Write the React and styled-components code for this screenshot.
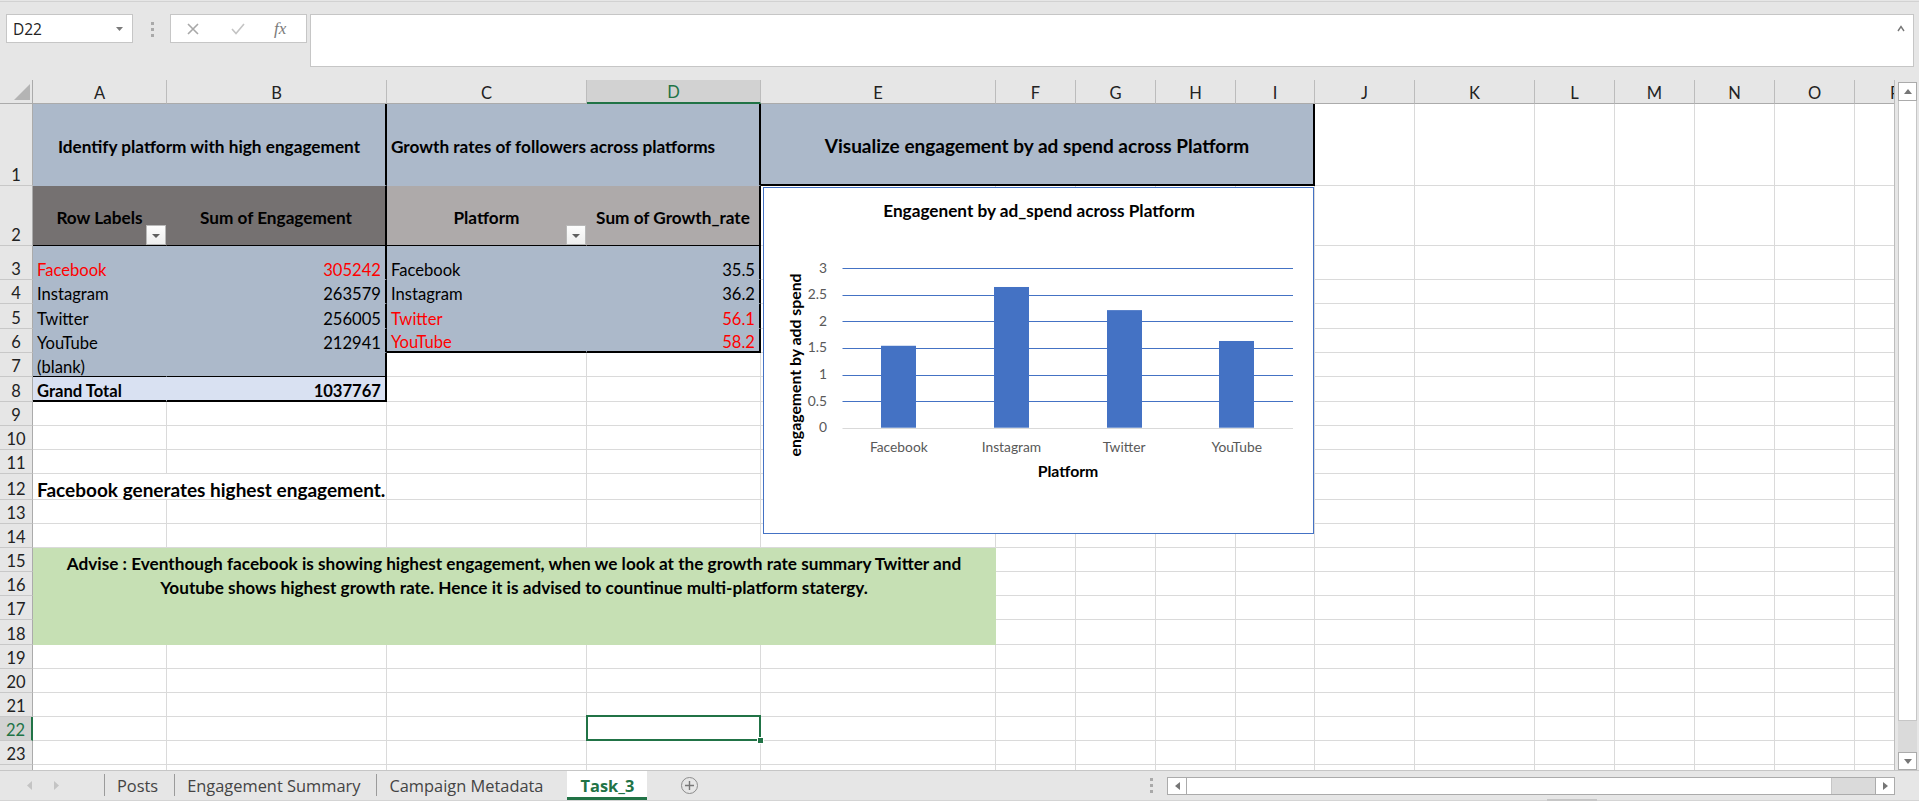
import React from 'react'
import styled, { createGlobalStyle, css } from 'styled-components'

const GREEN = '#217346'
const GRID = '#dadada'
const HEAD_BG = '#e6e6e6'
const FILL = {
  blue: '#acb9ca',
  dark: '#757171',
  gray: '#aeaaaa',
  total: '#d9e1f2',
  green: '#c6e0b4',
}
const SIZE = { md: '16.6px', head: '17.2px', lg: '19px', xl: '19px' }
const ALIGN = { left: 'flex-start', center: 'center', right: 'flex-end' }
const VALIGN = { top: 'flex-start', center: 'center', bottom: 'flex-end' }

const LETTERS = 'ABCDEFGHIJKLMNOP'.split('')
const COL_W = [134, 220, 200, 174, 235, 80, 80, 80, 79, 100, 120, 80, 80, 80, 80, 81]
const ROW_H = [82, 60, 34, 24, 25, 24, 24, 25, 24, 24, 24, 26, 24, 24, 24, 24, 24, 25, 24, 24, 24, 24, 24, 24]
const LAST_SHOWN = 23
const ACTIVE = { r: 22, c: 4 }

const engagement = [
  ['Facebook', '305242', true],
  ['Instagram', '263579'],
  ['Twitter', '256005'],
  ['YouTube', '212941'],
  ['(blank)', ''],
]
const growth = [
  ['Facebook', '35.5'],
  ['Instagram', '36.2'],
  ['Twitter', '56.1', true],
  ['YouTube', '58.2', true],
]
const head = { bold: true, align: 'center', valign: 'center', size: 'head' }

const specs = [
  { r: 1, c: 1, cs: 2, fill: 'blue', ...head, br: 2, text: 'Identify platform with high engagement' },
  { r: 1, c: 3, cs: 2, fill: 'blue', ...head, align: 'left', br: 2, text: 'Growth rates of followers across platforms' },
  { r: 1, c: 5, cs: 5, fill: 'blue', ...head, size: 'lg', br: 2, bb: 2, text: 'Visualize engagement by ad spend across Platform' },
  { r: 2, c: 1, fill: 'dark', ...head, bb: 1, filter: true, text: 'Row Labels' },
  { r: 2, c: 2, fill: 'dark', ...head, bb: 1, br: 2, text: 'Sum of Engagement' },
  { r: 2, c: 3, fill: 'gray', ...head, bb: 1, filter: true, text: 'Platform' },
  { r: 2, c: 4, fill: 'gray', ...head, bb: 1, br: 2, text: 'Sum of Growth_rate' },
  ...engagement.flatMap(([name, value, hot], i) => [
    { r: 3 + i, c: 1, fill: 'blue', red: hot, bb: i === 4 ? 1 : 0, text: name },
    { r: 3 + i, c: 2, fill: 'blue', red: hot, align: 'right', br: 2, bb: i === 4 ? 1 : 0, text: value },
  ]),
  ...growth.flatMap(([name, value, hot], i) => [
    { r: 3 + i, c: 3, fill: 'blue', red: hot, bb: i === 3 ? 2 : 0, text: name },
    { r: 3 + i, c: 4, fill: 'blue', red: hot, align: 'right', br: 2, bb: i === 3 ? 2 : 0, text: value },
  ]),
  { r: 8, c: 1, fill: 'total', bold: true, bb: 2, text: 'Grand Total' },
  { r: 8, c: 2, fill: 'total', bold: true, align: 'right', bb: 2, br: 2, text: '1037767' },
  { r: 12, c: 1, cs: 2, bold: true, size: 'xl', text: 'Facebook generates highest engagement.' },
  {
    r: 15, c: 1, cs: 5, rs: 4, fill: 'green', bold: true, size: 'head', align: 'center', valign: 'top', wrap: true,
    text: [
      'Advise : Eventhough facebook is showing highest engagement, when we look at the growth rate summary Twitter and',
      'Youtube shows highest growth rate. Hence it is advised to countinue multi-platform statergy.',
    ],
  },
]

const specAt = {}
const covered = new Set()
specs.forEach((s) => {
  specAt[`${s.r}-${s.c}`] = s
  for (let r = s.r; r < s.r + (s.rs || 1); r++)
    for (let c = s.c; c < s.c + (s.cs || 1); c++)
      if (r !== s.r || c !== s.c) covered.add(`${r}-${c}`)
})

const BARS = [
  { label: 'Facebook', value: 1.54 },
  { label: 'Instagram', value: 2.645 },
  { label: 'Twitter', value: 2.21 },
  { label: 'YouTube', value: 1.63 },
]
const TICKS = [3, 2.5, 2, 1.5, 1, 0.5, 0]
const PLOT = { left: 79.5, right: 530, base: 240.7, unit: 53.2 }
const TABS = ['Posts', 'Engagement Summary', 'Campaign Metadata']

const GlobalStyle = createGlobalStyle`
  html, body { margin: 0; padding: 0; overflow: hidden; background: #e6e6e6; }
  body { font-family: Lato, "Noto Sans", sans-serif; }
`

const Window = styled.div`
  width: 1919px;
  height: 801px;
  display: flex;
  flex-direction: column;
  overflow: hidden;
  background: ${HEAD_BG};
  font-family: Lato, "Noto Sans", sans-serif;
`

const FormulaBar = styled.div`
  flex: 0 0 80px;
  box-sizing: border-box;
  display: flex;
  align-items: flex-start;
  padding: 14px 5px 0 6px;
  box-shadow: inset 0 1px 0 ${HEAD_BG}, inset 0 2px 0 #d2d2d2;
`

const NameBox = styled.div`
  width: 127px;
  height: 29px;
  box-sizing: border-box;
  display: flex;
  align-items: center;
  justify-content: space-between;
  padding: 0 9px 0 6px;
  background: #fff;
  border: 1px solid #c6c6c6;
  font: 15.5px "Open Sans", sans-serif;
  color: #222;
`

const Caret = styled.svg`
  width: 7px;
  height: 4px;
  fill: #7a7a7a;
`

const Grip = styled.div`
  display: flex;
  flex-direction: column;
  gap: 3px;
  i {
    width: 3px;
    height: 3px;
    background: #a9a9a9;
  }
`

const BarGrip = styled(Grip)`
  margin: 8px 16px 0 18px;
`

const FxBox = styled.div`
  width: 137px;
  height: 29px;
  box-sizing: border-box;
  display: flex;
  align-items: center;
  padding-left: 16px;
  background: #fff;
  border: 1px solid #c6c6c6;
`

const FxIcon = styled.svg`
  width: ${(p) => p.$w}px;
  height: 12px;
  margin-left: ${(p) => p.$ml}px;
  fill: none;
  stroke: ${(p) => p.$tone};
  stroke-width: 1.6;
`

const FxLabel = styled.span`
  margin-left: 29px;
  font: italic 17px "Liberation Serif", serif;
  color: #7a7a7a;
`

const FormulaInput = styled.div`
  flex: 1;
  height: 53px;
  margin-left: 3px;
  box-sizing: border-box;
  position: relative;
  background: #fff;
  border: 1px solid #c6c6c6;
`

const Collapse = styled.svg`
  position: absolute;
  right: 8px;
  top: 10px;
  width: 8px;
  height: 7px;
  fill: none;
  stroke: #777;
  stroke-width: 1.4;
`

const SheetArea = styled.div`
  flex: none;
  height: 690px;
  min-height: 0;
  overflow: hidden;
  display: flex;
`

const Viewport = styled.div`
  width: 1895px;
  height: 690px;
  box-sizing: border-box;
  border-right: 1px solid #bdbdbd;
  position: relative;
  overflow: hidden;
  background: #fff;
`

const Sheet = styled.div`
  display: grid;
  width: max-content;
  grid-template-columns: 33px ${COL_W.map((w) => `${w}px`).join(' ')};
  grid-template-rows: 24px ${ROW_H.map((h) => `${h}px`).join(' ')};
`

const Corner = styled.div`
  grid-row: 1;
  grid-column: 1;
  position: relative;
  background: ${HEAD_BG};
  border-right: 1px solid #ababab;
  border-bottom: 1px solid #ababab;
  &::after {
    content: '';
    position: absolute;
    right: 2px;
    bottom: 3px;
    width: 16px;
    height: 16px;
    background: #b4b4b4;
    clip-path: polygon(100% 0, 100% 100%, 0 100%);
  }
`

const ColHead = styled.div`
  grid-row: 1;
  grid-column: ${(p) => p.$c + 1};
  display: flex;
  align-items: center;
  justify-content: center;
  padding-top: 2px;
  background: ${(p) => (p.$active ? '#d2d2d2' : HEAD_BG)};
  color: ${(p) => (p.$active ? GREEN : '#222')};
  border-right: 1px solid #bcbcbc;
  border-bottom: ${(p) => (p.$active ? `2px solid ${GREEN}` : '1px solid #ababab')};
  font-size: 16.5px;
`

const RowHead = styled.div`
  grid-column: 1;
  grid-row: ${(p) => p.$r + 1};
  display: flex;
  align-items: flex-end;
  justify-content: center;
  padding-bottom: 1px;
  background: ${(p) => (p.$active ? '#d2d2d2' : HEAD_BG)};
  color: ${(p) => (p.$active ? GREEN : '#222')};
  border-bottom: 1px solid #c8c8c8;
  border-right: ${(p) => (p.$active ? `2px solid ${GREEN}` : '1px solid #ababab')};
  font-size: 16.5px;
  line-height: 18px;
`

const edge = (w, fill) => (w ? `${w}px solid #000` : `1px solid ${fill ? 'transparent' : GRID}`)

const Cell = styled.div`
  grid-row: ${(p) => p.$r + 1} / span ${(p) => p.$rs};
  grid-column: ${(p) => p.$c + 1} / span ${(p) => p.$cs};
  position: relative;
  min-width: 0;
  display: flex;
  align-items: ${(p) => VALIGN[p.$valign]};
  justify-content: ${(p) => ALIGN[p.$align]};
  padding: ${(p) => (p.$valign === 'center' ? '4px 4px 0' : '0 4px')};
  background: ${(p) => (p.$fill ? FILL[p.$fill] : 'transparent')};
  border-right: ${(p) => edge(p.$br, p.$fill)};
  border-bottom: ${(p) => edge(p.$bb, p.$fill)};
  color: ${(p) => (p.$red ? '#ff0000' : '#000')};
  font-weight: ${(p) => (p.$bold ? 700 : 400)};
  font-size: ${(p) => SIZE[p.$size]};
  line-height: 18px;
  white-space: nowrap;
  ${(p) =>
    p.$wrap &&
    css`
      white-space: normal;
      text-align: center;
      line-height: 24px;
      padding-top: 4px;
    `}
  ${(p) =>
    p.$selected &&
    css`
      z-index: 2;
      &::before {
        content: '';
        position: absolute;
        left: -1px;
        top: -2px;
        right: -1px;
        bottom: -1px;
        border: 2px solid ${GREEN};
      }
      &::after {
        content: '';
        position: absolute;
        right: -4px;
        bottom: -4px;
        width: 5px;
        height: 5px;
        background: ${GREEN};
        border: 1px solid #fff;
      }
    `}
`

const FilterButton = styled.span`
  position: absolute;
  right: 0;
  bottom: 0;
  width: 20px;
  height: 20px;
  box-sizing: border-box;
  display: grid;
  place-items: center;
  background: linear-gradient(#fdfdfd, #eeeeee);
  border: 1px solid #b9b9b9;
  &::after {
    content: '';
    width: 0;
    height: 0;
    border-left: 4px solid transparent;
    border-right: 4px solid transparent;
    border-top: 4px solid #5f5f5f;
    margin-top: 1px;
  }
`

const ChartFrame = styled.div`
  position: absolute;
  left: 763px;
  top: 107px;
  width: 551px;
  height: 347px;
  box-sizing: border-box;
  border: 1px solid #4472c4;
  background: #fff;
  svg {
    display: block;
  }
`

const ChartTitle = styled.text`
  font-family: Lato, sans-serif;
  font-weight: 700;
  font-size: 17.2px;
  fill: #000;
`

const TickText = styled.text`
  font-family: Lato, sans-serif;
  font-size: 13.8px;
  fill: #595959;
`

const AxisTitle = styled.text`
  font-family: Lato, sans-serif;
  font-weight: 700;
  font-size: 15.8px;
  fill: #000;
`

const VScroll = styled.div`
  flex: 1;
  display: flex;
  flex-direction: column;
  padding: 2px 2px 0 3px;
`

const ScrollBtn = styled.div`
  flex: 0 0 ${(p) => p.$size || 18}px;
  display: grid;
  place-items: center;
  box-sizing: border-box;
  background: #fff;
  border: 1px solid #ababab;
`

const Arrow = styled.svg`
  width: ${(p) => p.$w}px;
  height: ${(p) => p.$h}px;
  fill: #767676;
`

const VThumb = styled.div`
  flex: 0 0 620px;
  box-sizing: border-box;
  background: #fff;
  border: 1px solid #c6c6c6;
  border-top: none;
`

const Track = styled.div`
  flex: 1;
  background: #dadada;
`

const TabBar = styled.div`
  flex: 0 0 28px;
  box-sizing: border-box;
  display: flex;
  align-items: stretch;
  border-top: 1px solid #c6c6c6;
  font: 16.4px "Open Sans", sans-serif;
  color: #444;
`

const TabNav = styled.div`
  width: 104px;
  display: flex;
  align-items: center;
  gap: 22px;
  padding-left: 27px;
  box-sizing: border-box;
  svg {
    width: 5px;
    height: 9px;
    fill: #c4c4c4;
  }
`

const SheetTab = styled.div`
  position: relative;
  display: flex;
  align-items: center;
  padding: 0 16px 0 13px;
  box-sizing: border-box;
  ${(p) =>
    p.$active
      ? css`
          margin-left: 8px;
          padding: 3px 13px 0;
          background: #fff;
          color: ${GREEN};
          font-weight: 700;
          border-bottom: 3px solid ${GREEN};
        `
      : css`
          &::before {
            content: '';
            position: absolute;
            left: 0;
            top: 3px;
            bottom: 4px;
            width: 1px;
            background: #9b9b9b;
          }
        `}
`

const AddSheet = styled.div`
  align-self: center;
  margin-left: 34px;
  width: 17px;
  height: 17px;
  box-sizing: border-box;
  border-radius: 50%;
  border: 1px solid #8c8c8c;
  display: grid;
  place-items: center;
  svg {
    width: 9px;
    height: 9px;
    stroke: #777;
    stroke-width: 1.4;
  }
`

const HScrollArea = styled.div`
  margin-left: auto;
  display: flex;
  align-items: center;
  gap: 14px;
  padding-right: 24px;
`

const HScroll = styled.div`
  width: 728px;
  height: 18px;
  box-sizing: border-box;
  display: flex;
  background: #fff;
  border: 1px solid #ababab;
  ${ScrollBtn} {
    border: none;
    flex-basis: 18px;
  }
`

const HThumb = styled.div`
  flex: 0 0 644px;
  border-left: 1px solid #ababab;
  border-right: 1px solid #c6c6c6;
  background: #fff;
`

const HTrack = styled(Track)`
  border-right: 1px solid #ababab;
`

const StatusBar = styled.div`
  flex: 1;
  position: relative;
  border-top: 1px solid #d4d4d4;
  &::after {
    content: '';
    position: absolute;
    left: 1547px;
    bottom: 0;
    width: 50px;
    height: 2px;
    background: #c6c6c6;
  }
`

function EngagementChart() {
  const step = (PLOT.right - PLOT.left) / BARS.length
  const y = (v) => PLOT.base - v * PLOT.unit
  const lineY = (v) => Math.round(y(v)) + 0.5
  return (
    <ChartFrame>
      <svg width="549" height="345" viewBox="1 1 549 345">
        <ChartTitle x="276" y="30" textAnchor="middle">
          Engagenent by ad_spend across Platform
        </ChartTitle>
        {TICKS.map((t) => (
          <g key={t}>
            {t > 0 && (
              <line x1={PLOT.left} x2={PLOT.right} y1={lineY(t)} y2={lineY(t)} stroke="#4472c4" strokeWidth="1" />
            )}
            <TickText x="64" y={y(t) + 4.5} textAnchor="end">
              {t}
            </TickText>
          </g>
        ))}
        {BARS.map((b, i) => {
          const cx = PLOT.left + step * (i + 0.5)
          return (
            <g key={b.label}>
              <rect x={Math.round(cx - 17.5)} y={y(b.value)} width="35" height={PLOT.base - y(b.value)} fill="#4472c4" />
              <TickText x={cx} y="265" textAnchor="middle">
                {b.label}
              </TickText>
            </g>
          )
        })}
        <line x1={PLOT.left} x2={PLOT.right} y1={lineY(0)} y2={lineY(0)} stroke="#d9d9d9" strokeWidth="1" />
        <AxisTitle x="305" y="290" textAnchor="middle">
          Platform
        </AxisTitle>
        <AxisTitle transform="translate(38 178) rotate(-90)" textAnchor="middle">
          engagement by add spend
        </AxisTitle>
      </svg>
    </ChartFrame>
  )
}

function SheetGrid() {
  return (
    <Sheet>
      <Corner />
      {LETTERS.map((l, i) => (
        <ColHead key={l} $c={i + 1} $active={i + 1 === ACTIVE.c}>
          {l}
        </ColHead>
      ))}
      {ROW_H.map((_, ri) => {
        const r = ri + 1
        return (
          <React.Fragment key={r}>
            <RowHead $r={r} $active={r === ACTIVE.r}>
              {r <= LAST_SHOWN ? r : ''}
            </RowHead>
            {LETTERS.map((l, ci) => {
              const c = ci + 1
              const key = `${r}-${c}`
              if (covered.has(key)) return null
              const s = specAt[key] || {}
              return (
                <Cell
                  key={key}
                  $r={r}
                  $c={c}
                  $rs={s.rs || 1}
                  $cs={s.cs || 1}
                  $fill={s.fill}
                  $bold={s.bold}
                  $red={s.red}
                  $size={s.size || 'md'}
                  $align={s.align || 'left'}
                  $valign={s.valign || 'bottom'}
                  $br={s.br}
                  $bb={s.bb}
                  $wrap={s.wrap}
                  $selected={r === ACTIVE.r && c === ACTIVE.c}
                >
                  {Array.isArray(s.text)
                    ? s.text.map((t, i) => (
                        <React.Fragment key={i}>
                          {i > 0 && <br />}
                          {t}
                        </React.Fragment>
                      ))
                    : s.text}
                  {s.filter && <FilterButton />}
                </Cell>
              )
            })}
          </React.Fragment>
        )
      })}
    </Sheet>
  )
}

const App = () => {
  return (
    <>
      <GlobalStyle />
      <Window>
        <FormulaBar>
          <NameBox>
            D22
            <Caret viewBox="0 0 7 4">
              <path d="M0 0h7L3.5 4z" />
            </Caret>
          </NameBox>
          <BarGrip>
            <i />
            <i />
            <i />
          </BarGrip>
          <FxBox>
            <FxIcon viewBox="0 0 12 12" $w={12} $ml={0} $tone="#a8a8a8">
              <path d="M1 1l10 10M11 1L1 11" />
            </FxIcon>
            <FxIcon viewBox="0 0 14 12" $w={14} $ml={32} $tone="#c4c4c4">
              <path d="M1 6l4 4.5L13 1" />
            </FxIcon>
            <FxLabel>fx</FxLabel>
          </FxBox>
          <FormulaInput>
            <Collapse viewBox="0 0 8 7">
              <path d="M1 6L4 1.5 7 6" />
            </Collapse>
          </FormulaInput>
        </FormulaBar>

        <SheetArea>
          <Viewport>
            <SheetGrid />
            <EngagementChart />
          </Viewport>
          <VScroll>
            <ScrollBtn $size={19}>
              <Arrow viewBox="0 0 8 5" $w={8} $h={5}>
                <path d="M0 5L4 0l4 5z" />
              </Arrow>
            </ScrollBtn>
            <VThumb />
            <Track />
            <ScrollBtn $size={18}>
              <Arrow viewBox="0 0 8 5" $w={8} $h={5}>
                <path d="M0 0h8L4 5z" />
              </Arrow>
            </ScrollBtn>
          </VScroll>
        </SheetArea>

        <TabBar>
          <TabNav>
            <svg viewBox="0 0 5 9">
              <path d="M5 0v9L0 4.5z" />
            </svg>
            <svg viewBox="0 0 5 9">
              <path d="M0 0v9l5-4.5z" />
            </svg>
          </TabNav>
          {TABS.map((t) => (
            <SheetTab key={t}>{t}</SheetTab>
          ))}
          <SheetTab $active>Task_3</SheetTab>
          <AddSheet>
            <svg viewBox="0 0 9 9">
              <path d="M4.5 0v9M0 4.5h9" />
            </svg>
          </AddSheet>
          <HScrollArea>
            <Grip>
              <i />
              <i />
              <i />
            </Grip>
            <HScroll>
              <ScrollBtn>
                <Arrow viewBox="0 0 5 8" $w={5} $h={8}>
                  <path d="M5 0v8L0 4z" />
                </Arrow>
              </ScrollBtn>
              <HThumb />
              <HTrack />
              <ScrollBtn>
                <Arrow viewBox="0 0 5 8" $w={5} $h={8}>
                  <path d="M0 0v8l5-4z" />
                </Arrow>
              </ScrollBtn>
            </HScroll>
          </HScrollArea>
        </TabBar>
        <StatusBar />
      </Window>
    </>
  )
}

export default App
